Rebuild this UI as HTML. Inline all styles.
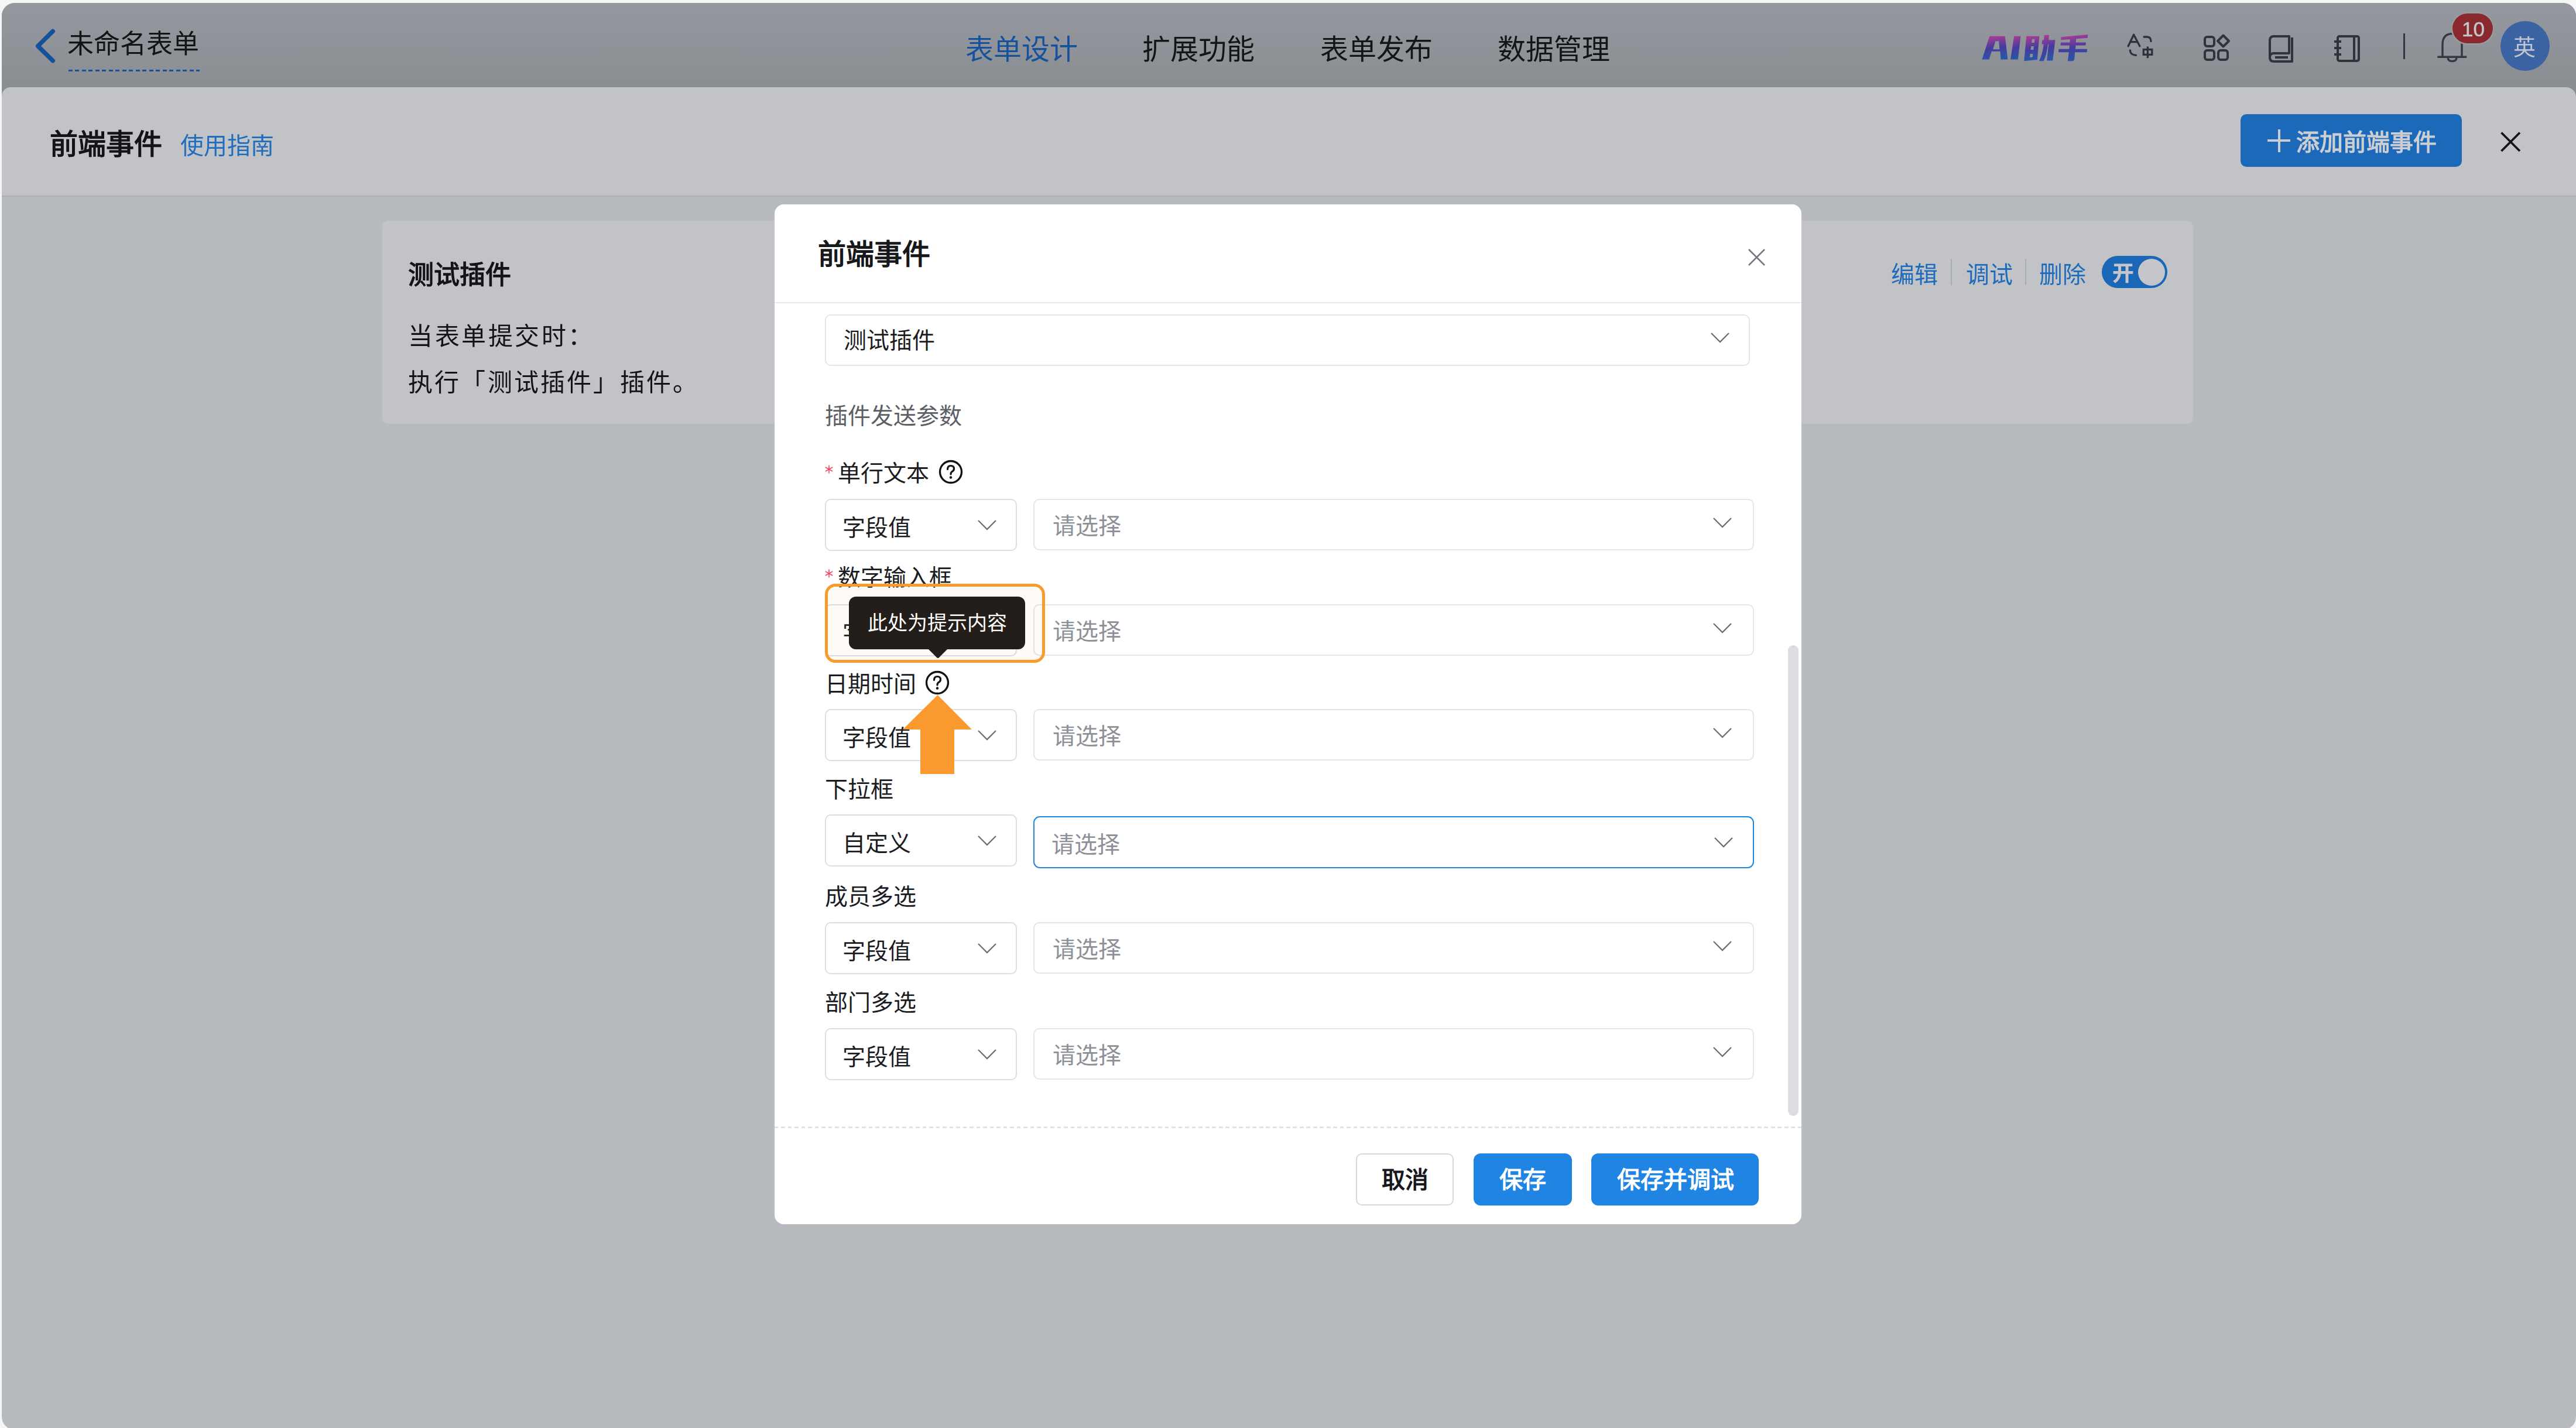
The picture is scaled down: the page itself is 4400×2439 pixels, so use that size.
<!DOCTYPE html>
<html lang="zh-CN">
<head>
<meta charset="utf-8">
<style>
html,body{margin:0;padding:0;}
body{width:4400px;height:2439px;overflow:hidden;background:#f6f6f6;position:relative;font-family:"Liberation Sans",sans-serif;color:#17181b;}
.a{position:absolute;}
.t{position:absolute;line-height:1;white-space:nowrap;}
#win{left:3px;top:5px;width:4397px;height:2437px;border-radius:22px;background:#b7babf;overflow:hidden;}
#hdr{left:0;top:0;width:4397px;height:190px;background:linear-gradient(#95989e,#8a8d92 144px,#8a8d92);}
#drw{left:0;top:144px;width:4397px;height:185px;background:#c2c3c7;border-radius:15px 17px 0 0;border-bottom:2px solid #adafb3;}
#card{left:650px;top:371px;width:3093px;height:348px;background:#c2c3c7;border-radius:10px;}
#modal{left:1323px;top:349px;width:1754px;height:1742px;background:#fff;border-radius:16px;}
.sel{position:absolute;box-sizing:border-box;border:2.5px solid #e3e5e9;border-radius:10px;background:#fff;}
.sell{border-color:#dadee6;}
.lbl{position:absolute;line-height:1;white-space:nowrap;font-size:39px;color:#1b1c1f;}
.ph{color:#8d9096;}
</style>
</head>
<body>
<div id="bgl" class="a" style="left:0;top:0;width:4400px;height:2439px;filter:blur(0.6px)">
<div id="win" class="a">
  <div id="hdr" class="a"></div>
  <div id="drw" class="a"></div>
</div>

<!-- header content (absolute page coords) -->
<svg class="a" style="left:55px;top:44px" width="46" height="70" viewBox="0 0 46 70"><path d="M35.2 9.4 L9.8 34.7 L35.2 59.6" fill="none" stroke="#15519b" stroke-width="7.5" stroke-linecap="round" stroke-linejoin="round"/></svg>
<div class="t" style="left:115px;top:53px;font-size:45px;color:#131416">未命名表单</div>
<div class="a" style="left:117px;top:119px;width:224px;height:3px;background:repeating-linear-gradient(90deg,#15519b 0 7px,transparent 7px 11.5px)"></div>

<div class="t" style="left:1649px;top:61px;font-size:48px;color:#15529b">表单设计</div>
<div class="t" style="left:1951px;top:61px;font-size:48px;color:#141518">扩展功能</div>
<div class="t" style="left:2255px;top:61px;font-size:48px;color:#141518">表单发布</div>
<div class="t" style="left:2558px;top:61px;font-size:48px;color:#141518">数据管理</div>

<!-- AI logo -->
<svg class="a" style="left:3375px;top:50px" width="200" height="62" viewBox="0 0 2576 799">
  <defs><linearGradient id="aig" x1="0" y1="0" x2="0.15" y2="1"><stop offset="0.1" stop-color="#a43c96"/><stop offset="0.55" stop-color="#453b9d"/><stop offset="1" stop-color="#2b55a6"/></linearGradient></defs>
  <g fill="url(#aig)" fill-rule="evenodd">
    <path d="M135,665 L300,150 L640,150 L700,665 L545,665 L535,485 L345,485 L290,665 Z M375,440 L430,260 L505,260 L520,440 Z"/>
    <path d="M840,150 L985,150 L925,665 L760,665 Z"/>
    <path d="M1110,150 L1395,150 L1350,670 L1060,700 Z M1235,215 L1295,215 L1285,295 L1225,295 Z M1215,375 L1275,375 L1265,450 L1205,450 Z M1195,540 L1255,540 L1245,615 L1185,615 Z"/>
    <path d="M1505,125 L1610,125 L1600,235 L1745,235 L1690,690 L1560,690 L1600,330 L1585,330 Q1560,560 1490,700 L1390,700 Q1470,540 1490,330 L1450,330 L1460,235 L1495,235 Z"/>
    <path d="M1875,170 L2465,115 L2458,190 L2205,210 L2200,290 L2420,290 L2412,355 L2195,355 L2188,435 L2450,435 L2442,505 L2180,505 L2168,650 Q2160,700 2100,700 L2020,700 L2045,505 L1815,505 L1823,435 L2052,435 L2060,355 L1860,355 L1868,290 L2066,290 L2072,220 L1868,235 Z"/>
  </g>
</svg>
<!-- translate icon -->
<svg class="a" style="left:3620px;top:45px" width="80" height="70" viewBox="0 0 80 70" fill="none" stroke="#2e3138" stroke-width="3.3" stroke-linecap="round">
  <path d="M15.2 33.8 L24.6 14.2 L34.8 33.8 M19.5 26.7 H30" stroke-linejoin="round"/>
  <path d="M42 18 H47.5 Q53.8 18.2 54 25.5"/>
  <path d="M18.3 41 Q18.8 49 28.5 49.3"/>
  <rect x="41.3" y="39.5" width="14.5" height="8.8" stroke-linecap="butt"/>
  <path d="M48.4 34.5 V54.2" stroke-linecap="butt"/>
</svg>
<!-- apps icon -->
<svg class="a" style="left:3762px;top:58px" width="50" height="50" viewBox="0 0 50 50" fill="none" stroke="#30333a" stroke-width="4">
  <rect x="4" y="5" width="16" height="16" rx="4"/>
  <rect x="4" y="28" width="16" height="16" rx="4"/>
  <rect x="27" y="28" width="16" height="16" rx="4"/>
  <path d="M35.5 2.5 L45 12 L35.5 21.5 L26 12 Z" stroke-linejoin="round"/>
</svg>
<!-- book icon -->
<svg class="a" style="left:3873px;top:58px" width="48" height="50" viewBox="0 0 48 50" fill="none" stroke="#30333a" stroke-width="4">
  <path d="M4 40 V11 Q4 4 11 4 H37 V33 H11 Q4 33 4 40 Q4 47 11 47 H42 V6" stroke-linejoin="round"/>
  <path d="M13 40 H35"/>
</svg>
<!-- notebook icon -->
<svg class="a" style="left:3986px;top:58px" width="48" height="50" viewBox="0 0 48 50" fill="none" stroke="#30333a" stroke-width="4">
  <rect x="7" y="4" width="36" height="42" rx="3"/>
  <path d="M35 4 V46"/>
  <path d="M1 13 H13 M1 24 H13 M1 35 H13"/>
</svg>
<div class="a" style="left:4105px;top:57px;width:3px;height:44px;background:#33363c"></div>
<!-- bell -->
<svg class="a" style="left:4160px;top:50px" width="56" height="60" viewBox="0 0 56 60" fill="none" stroke="#35383e" stroke-width="3.4">
  <path d="M12 46.5 V26 Q12 8 28.5 7.5 Q45 8 45 26 V46.5"/>
  <path d="M3.3 47.2 H53.2"/>
  <path d="M21.2 48 Q21.2 54.6 28.6 54.6 Q36 54.6 36 48"/>
</svg>
<div class="a" style="left:4189px;top:23px;width:69px;height:51px;border-radius:26px;background:#89292d;box-shadow:0 0 0 2.5px #989ba0"></div>
<div class="t" style="left:4205px;top:32px;font-size:35px;-webkit-text-stroke:0.5px #c3c6cb;color:#c3c6cb">10</div>
<div class="a" style="left:4271px;top:36px;width:84px;height:85px;border-radius:50%;background:#3b62a2"></div>
<div class="t" style="left:4293px;top:62px;font-size:38px;color:#bfc5cf">英</div>

<!-- drawer content -->
<div class="t" style="left:85px;top:223px;font-size:48px;font-weight:bold;color:#141416">前端事件</div>
<div class="t" style="left:308px;top:229px;font-size:40px;color:#1e6dbe">使用指南</div>
<div class="a" style="left:3827px;top:195px;width:378px;height:90px;border-radius:10px;background:#1b69b8"></div>
<svg class="a" style="left:3870px;top:218px" width="46" height="46" viewBox="0 0 46 46"><path d="M23 3 V42 M3 22 H42" stroke="#c9ccd1" stroke-width="4"/></svg>
<div class="t" style="left:3922px;top:223px;font-size:40px;font-weight:bold;color:#cbced3">添加前端事件</div>
<svg class="a" style="left:4266px;top:220px" width="44" height="44" viewBox="0 0 44 44"><path d="M6.5 6.5 L38 38 M38 6.5 L6.5 38" stroke="#151515" stroke-width="3.8"/></svg>

<!-- background card -->
<div id="card" class="a" style="left:653px;top:377px;width:3093px;height:347px"></div>
<div class="t" style="left:697px;top:448px;font-size:44px;font-weight:bold;color:#141416">测试插件</div>
<div class="t" style="left:697px;top:554px;font-size:42px;letter-spacing:3.5px;color:#141416">当表单提交时：</div>
<div class="t" style="left:697px;top:633px;font-size:42px;letter-spacing:3.2px;color:#141416">执行「测试插件」插件。</div>
<div class="t" style="left:3230px;top:449px;font-size:40px;color:#1d6bbb">编辑</div>
<div class="a" style="left:3332px;top:442px;width:2px;height:45px;background:#a9acb1"></div>
<div class="t" style="left:3358px;top:449px;font-size:40px;color:#1d6bbb">调试</div>
<div class="a" style="left:3459px;top:442px;width:2px;height:45px;background:#a9acb1"></div>
<div class="t" style="left:3483px;top:449px;font-size:40px;color:#1d6bbb">删除</div>
<div class="a" style="left:3590px;top:437px;width:112px;height:55px;border-radius:28px;background:#1967b6"></div>
<div class="a" style="left:3652px;top:442px;width:46px;height:46px;border-radius:50%;background:#c4c6ca"></div>
<div class="t" style="left:3609px;top:449px;font-size:35px;font-weight:bold;-webkit-text-stroke:1.1px #c4c6ca;color:#c4c6ca">开</div>

</div>
<!-- modal -->
<div id="modal" class="a"></div>
<div class="t" style="left:1397px;top:411px;font-size:48px;font-weight:bold;color:#17181b">前端事件</div>
<svg class="a" style="left:2984px;top:423px" width="33" height="33" viewBox="0 0 33 33"><path d="M3 3 L30 30 M30 3 L3 30" stroke="#75787e" stroke-width="2.6"/></svg>
<div class="a" style="left:1323px;top:516px;width:1754px;height:2px;background:#e9eaed"></div>

<div class="sel" style="left:1409px;top:537px;width:1580px;height:88px"></div>
<div class="lbl" style="left:1441px;top:562px">测试插件</div>
<svg class="a" style="left:2920px;top:566px" width="36" height="22" viewBox="0 0 36 22"><path d="M3 3 L18 18 L33 3" fill="none" stroke="#6c6f75" stroke-width="2.3"/></svg>

<div class="lbl" style="left:1409px;top:691px;color:#5c5f66">插件发送参数</div>

<!--ROWS-->
<svg class="a" style="left:1408px;top:793px" width="16" height="17" viewBox="0 0 16 17"><path d="M8 1.5 V15.5 M1.8 5 L14.2 12 M14.2 5 L1.8 12" stroke="#ee4a66" stroke-width="1.6"/></svg>
<div class="lbl" style="left:1431px;top:789px">单行文本</div>
<svg class="a" style="left:1603px;top:785px" width="42" height="42" viewBox="0 0 42 42"><circle cx="21" cy="21" r="18.5" fill="none" stroke="#111" stroke-width="3.3"/><path d="M15.5 16.5 Q15.5 10.5 21 10.5 Q26.5 10.5 26.5 15.5 Q26.5 19 22.5 21 Q21 22 21 25" fill="none" stroke="#111" stroke-width="3.2" stroke-linecap="round"/><circle cx="21" cy="30.5" r="2.2" fill="#111"/></svg>
<div class="sel sell" style="left:1409px;top:852px;width:328px;height:89px"></div>
<div class="lbl" style="left:1439px;top:882px">字段值</div>
<svg class="a" style="left:1668px;top:886px" width="36" height="22" viewBox="0 0 36 22"><path d="M3 3 L18 18 L33 3" fill="none" stroke="#6c6f75" stroke-width="2.3"/></svg>
<div class="sel" style="left:1765px;top:852px;width:1231px;height:88px"></div>
<div class="lbl ph" style="left:1798px;top:879px">请选择</div>
<svg class="a" style="left:2924px;top:882px" width="36" height="22" viewBox="0 0 36 22"><path d="M3 3 L18 18 L33 3" fill="none" stroke="#6c6f75" stroke-width="2.3"/></svg>
<svg class="a" style="left:1408px;top:971px" width="16" height="17" viewBox="0 0 16 17"><path d="M8 1.5 V15.5 M1.8 5 L14.2 12 M14.2 5 L1.8 12" stroke="#ee4a66" stroke-width="1.6"/></svg>
<div class="lbl" style="left:1431px;top:967px">数字输入框</div>
<div class="sel sell" style="left:1409px;top:1032px;width:328px;height:89px"></div>
<div class="lbl" style="left:1439px;top:1062px">字段值</div>
<svg class="a" style="left:1668px;top:1066px" width="36" height="22" viewBox="0 0 36 22"><path d="M3 3 L18 18 L33 3" fill="none" stroke="#6c6f75" stroke-width="2.3"/></svg>
<div class="sel" style="left:1765px;top:1032px;width:1231px;height:88px"></div>
<div class="lbl ph" style="left:1798px;top:1059px">请选择</div>
<svg class="a" style="left:2924px;top:1062px" width="36" height="22" viewBox="0 0 36 22"><path d="M3 3 L18 18 L33 3" fill="none" stroke="#6c6f75" stroke-width="2.3"/></svg>
<div class="lbl" style="left:1409px;top:1149px">日期时间</div>
<svg class="a" style="left:1580px;top:1145px" width="42" height="42" viewBox="0 0 42 42"><circle cx="21" cy="21" r="18.5" fill="none" stroke="#111" stroke-width="3.3"/><path d="M15.5 16.5 Q15.5 10.5 21 10.5 Q26.5 10.5 26.5 15.5 Q26.5 19 22.5 21 Q21 22 21 25" fill="none" stroke="#111" stroke-width="3.2" stroke-linecap="round"/><circle cx="21" cy="30.5" r="2.2" fill="#111"/></svg>
<div class="sel sell" style="left:1409px;top:1211px;width:328px;height:89px"></div>
<div class="lbl" style="left:1439px;top:1241px">字段值</div>
<svg class="a" style="left:1668px;top:1245px" width="36" height="22" viewBox="0 0 36 22"><path d="M3 3 L18 18 L33 3" fill="none" stroke="#6c6f75" stroke-width="2.3"/></svg>
<div class="sel" style="left:1765px;top:1211px;width:1231px;height:88px"></div>
<div class="lbl ph" style="left:1798px;top:1238px">请选择</div>
<svg class="a" style="left:2924px;top:1241px" width="36" height="22" viewBox="0 0 36 22"><path d="M3 3 L18 18 L33 3" fill="none" stroke="#6c6f75" stroke-width="2.3"/></svg>
<div class="lbl" style="left:1409px;top:1329px">下拉框</div>
<div class="sel sell" style="left:1409px;top:1391px;width:328px;height:89px"></div>
<div class="lbl" style="left:1439px;top:1421px">自定义</div>
<svg class="a" style="left:1668px;top:1425px" width="36" height="22" viewBox="0 0 36 22"><path d="M3 3 L18 18 L33 3" fill="none" stroke="#6c6f75" stroke-width="2.3"/></svg>
<div class="sel" style="left:1765px;top:1394px;width:1231px;height:89px;border:2.7px solid #1f84e2;border-radius:11px"></div>
<div class="lbl ph" style="left:1796px;top:1423px">请选择</div>
<svg class="a" style="left:2926px;top:1428px" width="36" height="22" viewBox="0 0 36 22"><path d="M3 3 L18 18 L33 3" fill="none" stroke="#6c6f75" stroke-width="2.3"/></svg>
<div class="lbl" style="left:1409px;top:1512px">成员多选</div>
<div class="sel sell" style="left:1409px;top:1575px;width:328px;height:89px"></div>
<div class="lbl" style="left:1439px;top:1605px">字段值</div>
<svg class="a" style="left:1668px;top:1609px" width="36" height="22" viewBox="0 0 36 22"><path d="M3 3 L18 18 L33 3" fill="none" stroke="#6c6f75" stroke-width="2.3"/></svg>
<div class="sel" style="left:1765px;top:1575px;width:1231px;height:88px"></div>
<div class="lbl ph" style="left:1798px;top:1602px">请选择</div>
<svg class="a" style="left:2924px;top:1605px" width="36" height="22" viewBox="0 0 36 22"><path d="M3 3 L18 18 L33 3" fill="none" stroke="#6c6f75" stroke-width="2.3"/></svg>
<div class="lbl" style="left:1409px;top:1693px">部门多选</div>
<div class="sel sell" style="left:1409px;top:1756px;width:328px;height:89px"></div>
<div class="lbl" style="left:1439px;top:1786px">字段值</div>
<svg class="a" style="left:1668px;top:1790px" width="36" height="22" viewBox="0 0 36 22"><path d="M3 3 L18 18 L33 3" fill="none" stroke="#6c6f75" stroke-width="2.3"/></svg>
<div class="sel" style="left:1765px;top:1756px;width:1231px;height:88px"></div>
<div class="lbl ph" style="left:1798px;top:1783px">请选择</div>
<svg class="a" style="left:2924px;top:1786px" width="36" height="22" viewBox="0 0 36 22"><path d="M3 3 L18 18 L33 3" fill="none" stroke="#6c6f75" stroke-width="2.3"/></svg>
<div class="a" style="left:1409px;top:997px;width:376px;height:135px;box-sizing:border-box;border:5px solid #f99a2d;border-radius:18px;background:rgba(245,170,80,0.06)"></div>
<div class="a" style="left:1450px;top:1019px;width:301px;height:90px;border-radius:12px;background:#231e19"></div>
<svg class="a" style="left:1584px;top:1107px" width="36" height="19" viewBox="0 0 36 19"><path d="M0 0 L36 0 L20 16 Q18 18 16 16 Z" fill="#231e19"/></svg>
<div class="t" style="left:1482px;top:1047px;font-size:34px;color:#fff">此处为提示内容</div>
<svg class="a" style="left:1540px;top:1185px" width="124" height="140" viewBox="0 0 124 140"><path d="M61.5 2 L120 61 L90 61 L90 137 L32 137 L32 61 L2 61 Z" fill="#fa9a2e"/></svg>
<!--/ROWS-->

<!-- scrollbar -->
<div class="a" style="left:3054px;top:1102px;width:18px;height:804px;border-radius:9px;background:#dcdde0"></div>
<!-- footer -->
<div class="a" style="left:1323px;top:1924px;width:1754px;height:2.5px;background:repeating-linear-gradient(90deg,#e2e3e6 0 6.5px,transparent 6.5px 11.5px)"></div>
<div class="a" style="left:2316px;top:1970px;width:167px;height:89px;box-sizing:border-box;border:2.5px solid #d5d8de;border-radius:10px;background:#fff"></div>
<div class="t" style="left:2360px;top:1995px;font-size:40px;font-weight:bold;color:#17181b">取消</div>
<div class="a" style="left:2517px;top:1970px;width:168px;height:89px;border-radius:12px;background:#1f84e2"></div>
<div class="t" style="left:2561px;top:1995px;font-size:40px;font-weight:bold;color:#fff">保存</div>
<div class="a" style="left:2718px;top:1970px;width:286px;height:89px;border-radius:12px;background:#1f84e2"></div>
<div class="t" style="left:2762px;top:1995px;font-size:40px;font-weight:bold;color:#fff">保存并调试</div>

</body>
</html>
